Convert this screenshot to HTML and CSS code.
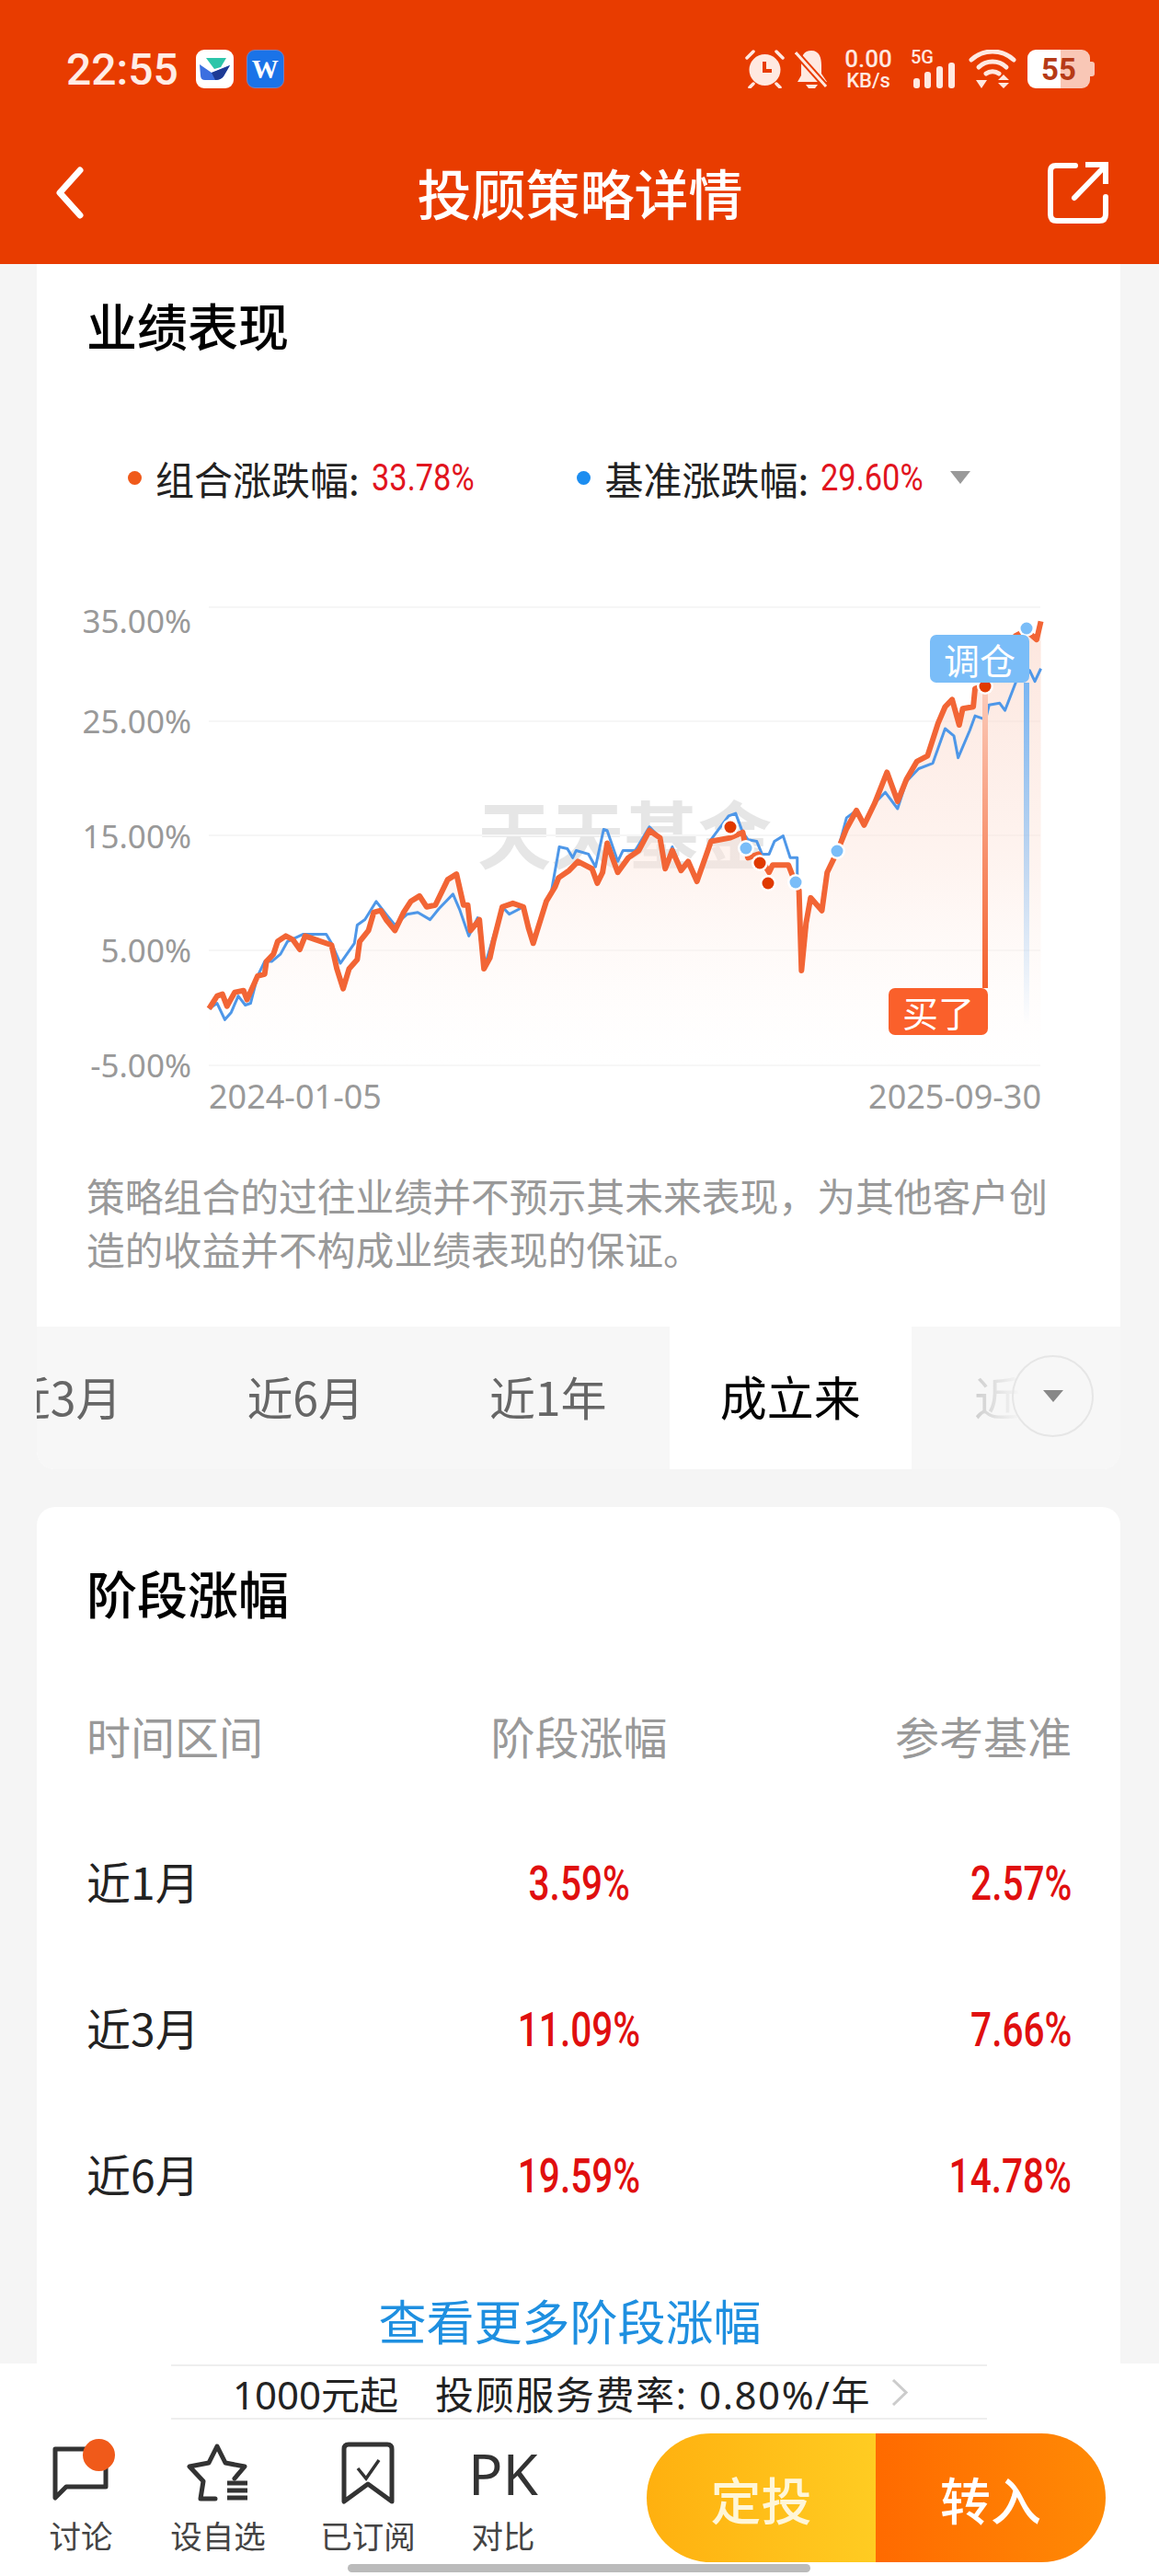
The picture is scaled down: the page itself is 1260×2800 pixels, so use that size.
FILE: index.html
```html
<!DOCTYPE html>
<html lang="zh-CN">
<head>
    <meta charset="UTF-8">
    <meta name="viewport" content="width=device-width, initial-scale=1.0">
    <title>投顾策略详情</title>
    <link rel="stylesheet" href="styles.css">
</head>
<body>
<div class="page">

    <header class="top-bar">
        <div class="status-bar">
            <span class="time">22:55</span>
            <span class="app-icon app-white">
                <svg width="34" height="26" viewBox="0 0 34 26">
                    <path d="M8 1 L30 1 L24 11 L17 13 Z" fill="#2cc5a9"/>
                    <path d="M1 8 L14 17 L34 9 L27 21 Q24 25 18 25 L7 25 Q2 25 2 20 Z" fill="#3b6fe0"/>
                    <path d="M14 17 L34 9 L27 21 Q24 25 18 25 Z" fill="#1d3a94"/>
                </svg>
            </span>
            <span class="app-icon app-blue"><span class="app-w">W</span></span>

            <div class="status-right">
                <svg class="st-alarm" width="43" height="42" viewBox="0 0 43 42">
                    <circle cx="21.5" cy="22" r="17" fill="#ffe9e1"/>
                    <path d="M21 13 V23 H29" fill="none" stroke="#e83c00" stroke-width="4"/>
                    <path d="M2 9 L9 2 M41 9 L34 2 M9 37 L5 41 M34 37 L38 41" stroke="#ffe9e1" stroke-width="3.5" stroke-linecap="round"/>
                </svg>
                <svg class="st-bell" width="36" height="42" viewBox="0 0 36 42">
                    <path d="M18 1 C27 1 29 9 29 17 L29 26 L35 35 L3 35 L7 28 L7 15 C7 7 10 1 18 1 Z" fill="#ffe9e1"/>
                    <path d="M12 38 H25 L22 42 H15 Z" fill="#ffe9e1"/>
                    <path d="M1 3 L34 40" stroke="#e83c00" stroke-width="7"/>
                    <path d="M1 3 L34 40" stroke="#ffe9e1" stroke-width="3"/>
                </svg>
                <div class="st-speed">
                    <span class="speed-num">0.00</span>
                    <span class="speed-unit">KB/s</span>
                </div>
                <svg class="st-signal" width="50" height="54" viewBox="0 -6 50 54">
                    <text class="st-5g" x="0" y="15">5G</text>
                    <rect x="3" y="31" width="7" height="11" rx="3" fill="#ffe9e1"/>
                    <rect x="15" y="24" width="7" height="18" rx="3" fill="#ffe9e1"/>
                    <rect x="28" y="18" width="7" height="24" rx="3" fill="#ffe9e1"/>
                    <rect x="41" y="14" width="7" height="28" rx="3" fill="#ffe9e1"/>
                </svg>
                <svg class="st-wifi" width="52" height="42" viewBox="0 0 52 42">
                    <path d="M3 11 C16 -1 36 -1 49 11" fill="none" stroke="#ffe9e1" stroke-width="5" stroke-linecap="round"/>
                    <path d="M11 19 C19 11 33 11 41 19" fill="none" stroke="#ffe9e1" stroke-width="5" stroke-linecap="round"/>
                    <path d="M19 26 C23 23 29 23 33 26" fill="none" stroke="#ffe9e1" stroke-width="5" stroke-linecap="round"/>
                    <path d="M8 33 H20 L14 42 Z M32 33 L38 27 L44 33 Z M32 36 H44 L38 42 Z" fill="#ffe9e1"/>
                </svg>
                <div class="st-battery"><span>55</span></div>
            </div>
        </div>

        <nav class="nav-bar">
            <svg class="nav-back" width="31" height="57" viewBox="0 0 31 57">
                <path d="M27 4 L5 28.5 L27 53" fill="none" stroke="#fff" stroke-width="7" stroke-linecap="round" stroke-linejoin="round"/>
            </svg>
            <h1 class="nav-title">投顾策略详情</h1>
            <svg class="nav-share" width="66" height="67" viewBox="0 0 66 67">
                <path d="M30 4 H9 Q3 4 3 10 V57 Q3 64 10 64 H56 Q63 64 63 57 V38" fill="none" stroke="#fff" stroke-width="6" stroke-linecap="round"/>
                <path d="M29 39 L60 7" fill="none" stroke="#fff" stroke-width="6" stroke-linecap="round"/>
                <path d="M41 3 H63 V24" fill="none" stroke="#fff" stroke-width="6"/>
            </svg>
        </nav>
    </header>

    <main class="scroll">
        <section class="card card-perf">
            <h3 class="card-title">业绩表现</h3>

            <div class="legend">
                <span class="legend-dot dot-orange"></span>
                <span class="legend-name">组合涨跌幅:</span>
                <span class="legend-value">33.78%</span>
                <span class="legend-dot dot-blue"></span>
                <span class="legend-name">基准涨跌幅:</span>
                <span class="legend-value">29.60%</span>
                <span class="legend-arrow"></span>
            </div>

            <!-- chart drawn in page coordinates, line data traced in a 2.6x working grid -->
            <svg class="chart" width="1178" height="600" viewBox="40 640 1178 600">
                <defs>
                    <linearGradient id="areaFill" x1="0" y1="0" x2="0" y2="1">
                        <stop offset="0" stop-color="#fbd5c7" stop-opacity="0.6"/>
                        <stop offset="0.55" stop-color="#fde6dd" stop-opacity="0.45"/>
                        <stop offset="1" stop-color="#fff" stop-opacity="0.2"/>
                    </linearGradient>
                    <linearGradient id="buyLine" x1="0" y1="0" x2="0" y2="1">
                        <stop offset="0" stop-color="#fbcdbd"/>
                        <stop offset="1" stop-color="#f4602c"/>
                    </linearGradient>
                    <linearGradient id="holdLine" x1="0" y1="0" x2="0" y2="1">
                        <stop offset="0" stop-color="#7ab6f2"/>
                        <stop offset="1" stop-color="#7ab6f2" stop-opacity="0"/>
                    </linearGradient>
                </defs>

                <text class="watermark" x="519" y="938">天天基金</text>

                <g class="grid-lines">
                    <line x1="227" x2="1131" y1="660" y2="660"/>
                    <line x1="227" x2="1131" y1="784" y2="784"/>
                    <line x1="227" x2="1131" y1="908" y2="908"/>
                    <line x1="227" x2="1131" y1="1033" y2="1033"/>
                    <line x1="227" x2="1131" y1="1158" y2="1158"/>
                </g>

                <g class="axis-y">
                    <text x="208" y="674">35.00%</text>
                    <text x="208" y="783">25.00%</text>
                    <text x="208" y="908">15.00%</text>
                    <text x="208" y="1032">5.00%</text>
                    <text x="208" y="1157">-5.00%</text>
                </g>
                <text class="axis-x" x="227" y="1191">2024-01-05</text>
                <text class="axis-x axis-x-end" x="1132" y="1191">2025-09-30</text>

                <g transform="translate(60 620) scale(.3827 .3954)">
                    <polygon class="area" points="437,1360 437,1205 460,1170 475,1165 488,1198 510,1160 535,1155 545,1180 575,1115 595,1110 600,1075 620,1055 632,1020 655,1005 675,1015 695,1042 710,1005 740,1015 785,1030 800,1095 818,1150 835,1095 858,1070 865,1020 890,990 905,940 925,935 940,960 965,990 990,940 1010,910 1035,895 1055,925 1080,920 1115,850 1140,835 1160,920 1172,920 1180,990 1205,960 1218,1095 1235,1065 1245,1020 1270,925 1300,915 1330,925 1345,985 1358,1025 1395,910 1420,870 1430,845 1460,825 1485,800 1525,820 1540,860 1555,830 1568,750 1598,830 1628,790 1658,770 1688,715 1718,735 1733,820 1753,770 1778,825 1798,800 1823,855 1863,745 1918,735 1953,720 1968,790 1998,780 2028,830 2038,810 2083,810 2093,835 2113,880 2120,1100 2133,970 2146,900 2178,935 2193,830 2223,770 2248,710 2276,660 2298,700 2328,640 2363,555 2393,635 2418,575 2448,525 2478,510 2508,420 2528,375 2548,355 2568,425 2578,380 2608,375 2613,325 2643,315 2728,180 2758,165 2788,190 2800,140 2800,1360"/>
                    <polyline class="line-blue" points="437,1205 460,1190 482,1235 500,1215 520,1170 540,1195 555,1190 575,1115 595,1075 615,1075 640,1055 660,1020 705,1000 770,1000 785,1025 810,1080 850,1025 858,975 880,960 912,910 940,945 965,975 1000,945 1030,940 1065,960 1090,930 1130,890 1150,935 1175,1005 1200,955 1218,1095 1270,925 1290,945 1330,925 1358,1025 1395,915 1410,880 1432,760 1455,765 1470,790 1480,770 1515,780 1535,815 1558,712 1568,715 1598,800 1613,770 1648,770 1688,705 1718,735 1733,820 1753,760 1778,820 1798,800 1823,850 1863,740 1913,675 1933,668 1953,720 1968,740 1993,745 2008,780 2028,780 2043,745 2068,730 2088,790 2108,790 2108,830 2120,1080 2146,900 2178,935 2193,830 2223,770 2248,680 2276,660 2298,700 2328,640 2358,610 2393,655 2418,580 2453,545 2493,530 2528,435 2553,455 2565,515 2598,440 2613,400 2643,410 2653,370 2683,365 2698,385 2728,310 2738,270 2768,275 2783,305 2800,270"/>
                    <polyline class="line-orange" points="437,1205 460,1170 475,1165 488,1198 510,1160 535,1155 545,1180 575,1115 595,1110 600,1075 620,1055 632,1020 655,1005 675,1015 695,1042 710,1005 740,1015 785,1030 800,1095 818,1150 835,1095 858,1070 865,1020 890,990 905,940 925,935 940,960 965,990 990,940 1010,910 1035,895 1055,925 1080,920 1115,850 1140,835 1160,920 1172,920 1180,990 1205,960 1218,1095 1235,1065 1245,1020 1270,925 1300,915 1330,925 1345,985 1358,1025 1395,910 1420,870 1430,845 1460,825 1485,800 1525,820 1540,860 1555,830 1568,750 1598,830 1628,790 1658,770 1688,715 1718,735 1733,820 1753,770 1778,825 1798,800 1823,855 1863,745 1918,735 1953,720 1968,790 1998,780 2028,830 2038,810 2083,810 2093,835 2113,880 2120,1100 2133,970 2146,900 2178,935 2193,830 2223,770 2248,710 2276,660 2298,700 2328,640 2363,555 2393,635 2418,575 2448,525 2478,510 2508,420 2528,375 2548,355 2568,425 2578,380 2608,375 2613,325 2643,315 2728,180 2758,165 2788,190 2800,140"/>
                </g>

                <rect x="1068" y="742" width="6" height="332" fill="url(#buyLine)"/>
                <rect x="1113" y="742" width="6" height="372" fill="url(#holdLine)"/>

                <g class="marks">
                    <circle class="ring" cx="794" cy="899" r="9"/><circle class="mark-red" cx="794" cy="899" r="6.5"/>
                    <circle class="ring" cx="811" cy="922" r="9"/><circle class="mark-blue" cx="811" cy="922" r="6.5"/>
                    <circle class="ring" cx="826" cy="938" r="9"/><circle class="mark-red" cx="826" cy="938" r="6.5"/>
                    <circle class="ring" cx="835" cy="960" r="9"/><circle class="mark-red" cx="835" cy="960" r="6.5"/>
                    <circle class="ring" cx="865" cy="959" r="9"/><circle class="mark-blue" cx="865" cy="959" r="6.5"/>
                    <circle class="ring" cx="910" cy="925" r="9"/><circle class="mark-blue" cx="910" cy="925" r="6.5"/>
                    <circle class="ring" cx="1071" cy="746" r="9"/><circle class="mark-red" cx="1071" cy="746" r="6.5"/>
                    <circle class="ring" cx="1116" cy="683" r="9"/><circle class="mark-blue" cx="1116" cy="683" r="6.5"/>
                </g>

                <rect x="1011" y="690" width="108" height="52" rx="7" fill="#7abdf8"/>
                <text class="tag-text" x="1065" y="716">调仓</text>
                <rect x="966" y="1074" width="108" height="51" rx="7" fill="#fa602b"/>
                <text class="tag-text" x="1020" y="1099">买了</text>
            </svg>

            <p class="disclaimer">策略组合的过往业绩并不预示其未来表现，为其他客户创造的收益并不构成业绩表现的保证。</p>

            <div class="tabs">
                <div class="tab">近3月</div>
                <div class="tab">近6月</div>
                <div class="tab">近1年</div>
                <div class="tab tab-active">成立来</div>
                <div class="tab">近2年</div>
                <div class="tabs-fade"></div>
                <div class="tabs-more"><span class="tabs-more-arrow"></span></div>
            </div>
        </section>

        <section class="card card-stage">
            <h3 class="card-title">阶段涨幅</h3>
            <table class="stage-table">
                <thead>
                    <tr>
                        <th>时间区间</th>
                        <th>阶段涨幅</th>
                        <th>参考基准</th>
                    </tr>
                </thead>
                <tbody>
                    <tr>
                        <td>近1月</td>
                        <td><span class="stage-num">3.59%</span></td>
                        <td><span class="stage-num">2.57%</span></td>
                    </tr>
                    <tr>
                        <td>近3月</td>
                        <td><span class="stage-num">11.09%</span></td>
                        <td><span class="stage-num">7.66%</span></td>
                    </tr>
                    <tr>
                        <td>近6月</td>
                        <td><span class="stage-num">19.59%</span></td>
                        <td><span class="stage-num">14.78%</span></td>
                    </tr>
                </tbody>
            </table>
            <div class="more-link">查看更多阶段涨幅</div>
        </section>
    </main>

    <footer class="bottom-bar">
        <div class="fee-row">
            <span>1000元起</span>
            <span class="fee-rate">投顾服务费率: 0.80%/年</span>
            <svg class="fee-chevron" width="18" height="29" viewBox="0 0 18 29">
                <path d="M2 1 L16 14.5 L2 28" fill="none" stroke="#ccc" stroke-width="3"/>
            </svg>
        </div>
        <div class="action-row">
            <div class="tools">
                <div class="tool">
                    <div class="tool-icon tool-chat">
                        <svg width="62" height="62" viewBox="0 0 62 62">
                            <path d="M3 5 H58 V46 H15 L3 58 Z" fill="none" stroke="#333" stroke-width="5" stroke-linejoin="round"/>
                        </svg>
                        <span class="chat-badge"></span>
                    </div>
                    <span class="tool-label">讨论</span>
                </div>
                <div class="tool">
                    <div class="tool-icon">
                        <svg width="68" height="64" viewBox="0 0 68 64">
                            <path d="M31 60 L15 60 L18 41 L3 25 L24 21 L33 3 L42 21 L63 25 L52 38" fill="none" stroke="#333" stroke-width="5" stroke-linejoin="round" stroke-linecap="round"/>
                            <path d="M44 43 H66 M44 51 H66 M44 59 H66" stroke="#333" stroke-width="5"/>
                        </svg>
                    </div>
                    <span class="tool-label">设自选</span>
                </div>
                <div class="tool">
                    <div class="tool-icon">
                        <svg width="58" height="68" viewBox="0 0 58 68">
                            <path d="M3 8 Q3 3 8 3 H50 Q55 3 55 8 V65 L29 46 L3 65 Z" fill="none" stroke="#333" stroke-width="5" stroke-linejoin="round"/>
                            <path d="M18 29 L27 40 L41 20" fill="none" stroke="#333" stroke-width="3.5"/>
                        </svg>
                    </div>
                    <span class="tool-label">已订阅</span>
                </div>
                <div class="tool">
                    <div class="tool-icon tool-pk">PK</div>
                    <span class="tool-label">对比</span>
                </div>
            </div>
            <div class="trade-buttons">
                <div class="btn-plan">定投</div>
                <div class="btn-buy">转入</div>
            </div>
        </div>
    </footer>

    <div class="home-indicator"></div>
</div>
</body>
</html>
```

FILE: styles.css
```css
* {
    box-sizing: border-box;
}

body {
    margin: 0;
    font-family: "Noto Sans", "Noto Sans CJK SC", sans-serif;
}

.page {
    position: relative;
    width: 1260px;
    height: 2800px;
    display: flex;
    flex-direction: column;
    overflow: hidden;
    background-color: #f5f5f5;
    color: #000;
}

/* top bar */
.top-bar {
    flex: none;
    height: 287px;
    background-color: #e83c00;
    color: #fff;
}

.status-bar {
    height: 150px;
    display: flex;
    align-items: center;
    padding: 0 70px 0 72px;
}

.time {
    font-family: Roboto, sans-serif;
    font-weight: 500;
    font-size: 48px;
    color: #ffece5;
    margin-right: 19px;
}

.app-icon {
    width: 41px;
    height: 42px;
    border-radius: 9px;
    display: flex;
    align-items: center;
    justify-content: center;
    margin-right: 14px;
}

.app-white {
    background-color: #fff;
}

.app-blue {
    background-color: #1a73e8;
    border: 1px solid #7d7fb8;
}

.app-w {
    font-family: "Liberation Serif", serif;
    font-weight: 700;
    font-size: 29px;
    line-height: 1;
    color: #fff;
}

.status-right {
    margin-left: auto;
    display: flex;
    align-items: center;
}

.st-bell {
    margin-left: 11px;
}

.st-speed {
    margin-left: 18px;
    width: 52px;
    display: flex;
    flex-direction: column;
    align-items: center;
    font-family: Roboto, sans-serif;
    font-weight: 500;
    color: #ffe9e1;
}

.speed-num {
    font-size: 26px;
    line-height: 26px;
}

.speed-unit {
    font-size: 22px;
    line-height: 22px;
}

.st-signal {
    margin-left: 20px;
}

.st-5g {
    font-family: Roboto, sans-serif;
    font-weight: 500;
    font-size: 20px;
    fill: #ffe9e1;
}

.st-wifi {
    margin-left: 13px;
}

.st-battery {
    position: relative;
    margin-left: 12px;
    margin-right: 5px;
    width: 68px;
    height: 42px;
    border-radius: 9px;
    background: linear-gradient(90deg, #fff 36px, #f9c7b6 36px);
    display: flex;
    align-items: center;
    justify-content: center;
    font-family: Roboto, sans-serif;
    font-weight: 700;
    font-size: 33px;
    color: #b63a16;
}

.st-battery::after {
    content: "";
    position: absolute;
    right: -5px;
    top: 13px;
    width: 5px;
    height: 16px;
    border-radius: 0 3px 3px 0;
    background-color: #f9c7b6;
}

.nav-bar {
    height: 137px;
    padding: 0 55px 19px 60px;
    display: grid;
    grid-template-columns: 1fr auto 1fr;
    align-items: center;
}

.nav-title {
    margin: 0 4px 0 0;
    font-family: "Noto Sans CJK SC", sans-serif;
    font-size: 59px;
    font-weight: 500;
    line-height: 70px;
}

.nav-share {
    justify-self: end;
}

/* cards */
.scroll {
    flex: 1;
    min-height: 0;
    overflow: hidden;
    padding: 0 42px 0 40px;
}

.card {
    background-color: #fff;
}

.card-perf {
    padding-top: 38px;
    border-radius: 0 0 20px 20px;
    overflow: hidden;
}

.card-stage {
    margin-top: 41px;
    padding: 65px 53px 0 54px;
    border-radius: 20px 20px 0 0;
    height: 940px;
}

.card-title {
    margin: 0;
    font-family: "Noto Sans CJK SC", sans-serif;
    font-size: 55px;
    font-weight: 500;
    line-height: 54px;
}

.card-perf .card-title {
    padding-left: 54px;
}

/* legend */
.legend {
    margin-top: 120px;
    padding-left: 99px;
    height: 40px;
    display: flex;
    align-items: center;
    font-family: "Noto Sans CJK SC", sans-serif;
    font-size: 42px;
    color: #222;
}

.legend-dot {
    width: 15px;
    height: 15px;
    border-radius: 50%;
    margin-right: 15px;
}

.dot-orange {
    background-color: #f05a1a;
}

.dot-blue {
    margin-left: 112px;
    background-color: #1c8df0;
}

/* the numbers are a narrow face in the app, squeeze Roboto to get there */
.legend-value {
    margin-left: 13px;
    margin-right: -18px;
    font-family: Roboto, sans-serif;
    font-size: 40px;
    color: #e1141e;
    transform: scaleX(0.86);
    transform-origin: left center;
}

.legend-arrow {
    margin-left: 29px;
    width: 0;
    height: 0;
    border-left: 11px solid transparent;
    border-right: 11px solid transparent;
    border-top: 14px solid #999;
}

/* chart */
.chart {
    display: block;
    margin-top: 101px;
}

.watermark {
    font-family: "Noto Sans CJK SC", sans-serif;
    font-size: 80px;
    font-weight: 700;
    fill: #e6e6e6;
}

.grid-lines line {
    stroke: #f6f6f6;
    stroke-width: 2;
}

.axis-y text {
    font-size: 35px;
    fill: #999;
    text-anchor: end;
    dominant-baseline: central;
}

.axis-x {
    font-size: 36px;
    fill: #999;
    dominant-baseline: central;
}

.axis-x-end {
    text-anchor: end;
}

.area {
    fill: url(#areaFill);
}

.line-blue,
.line-orange {
    fill: none;
    vector-effect: non-scaling-stroke;
    stroke-linejoin: round;
}

.line-blue {
    stroke: #4e97e8;
    stroke-width: 3;
}

.line-orange {
    stroke: #f26535;
    stroke-width: 6;
}

.ring {
    fill: #fff;
}

.mark-red {
    fill: #e03a00;
}

.mark-blue {
    fill: #7abdf8;
}

.tag-text {
    font-family: "Noto Sans CJK SC", sans-serif;
    font-size: 39px;
    fill: #fff;
    text-anchor: middle;
    dominant-baseline: central;
}

.disclaimer {
    margin: 30px 53px 56px 54px;
    font-family: "Noto Sans CJK SC", sans-serif;
    font-size: 41.8px;
    line-height: 58px;
    color: #999;
}

/* range tabs */
.tabs {
    position: relative;
    height: 155px;
    display: flex;
    margin-left: -103px;
    background-color: #f7f7f7;
    font-family: "Noto Sans CJK SC", sans-serif;
    font-size: 50px;
    color: #666;
}

.tab {
    flex: none;
    width: 263.5px;
    padding-bottom: 5px;
    display: flex;
    align-items: center;
    justify-content: center;
}

.tab-active {
    background-color: #fff;
    color: #000;
    font-size: 51px;
}

.tabs-fade {
    position: absolute;
    top: 0;
    bottom: 0;
    right: 0;
    width: 180px;
    background: linear-gradient(90deg, rgba(247, 247, 247, 0.6), #f7f7f7 40%);
}

.tabs-more {
    position: absolute;
    right: 29px;
    top: 31px;
    width: 89px;
    height: 89px;
    border-radius: 50%;
    border: 2px solid #e6e6e6;
    display: flex;
    align-items: center;
    justify-content: center;
}

.tabs-more-arrow {
    width: 0;
    height: 0;
    border-left: 11px solid transparent;
    border-right: 11px solid transparent;
    border-top: 13px solid #888;
}

/* stage table */
.stage-table {
    width: 100%;
    margin-top: 51px;
    border-collapse: collapse;
    table-layout: fixed;
    font-family: "Noto Sans CJK SC", sans-serif;
    font-size: 48px;
}

.stage-table th {
    height: 156px;
    padding: 0;
    font-weight: 400;
    color: #999;
}

.stage-table td {
    height: 159px;
    padding: 0;
    color: #222;
}

.stage-table th:nth-child(1),
.stage-table td:nth-child(1) {
    text-align: left;
}

.stage-table th:nth-child(2),
.stage-table td:nth-child(2) {
    text-align: center;
}

.stage-table th:nth-child(3),
.stage-table td:nth-child(3) {
    text-align: right;
}

.stage-num {
    display: inline-block;
    font-family: Roboto, sans-serif;
    font-size: 52px;
    font-weight: 500;
    line-height: 56px;
    color: #e00f0f;
    transform: scaleX(0.78);
}

.stage-table td:nth-child(3) .stage-num {
    transform-origin: right center;
}

.more-link {
    margin-top: 53px;
    padding-right: 20px;
    font-family: "Noto Sans CJK SC", sans-serif;
    font-size: 52px;
    line-height: 56px;
    text-align: center;
    color: #1e8fe0;
}

/* bottom bar */
.bottom-bar {
    flex: none;
    height: 231px;
    background-color: #fff;
}

.fee-row {
    margin: 1px 187px 0 186px;
    height: 60px;
    padding-right: 19px;
    border-top: 2px solid #eee;
    border-bottom: 2px solid #eee;
    display: flex;
    align-items: center;
    justify-content: center;
    font-size: 42px;
    color: #222;
}

.fee-rate {
    margin-left: 40px;
    letter-spacing: 1.6px;
}

.fee-chevron {
    margin-left: 22px;
}

.action-row {
    display: flex;
}

.tools {
    flex: none;
    margin-left: 28px;
    padding-top: 24px;
    display: grid;
    grid-template-columns: 120px 178px 148px 146px;
    justify-items: center;
}

.tool {
    display: flex;
    flex-direction: column;
    align-items: center;
}

.tool-icon {
    position: relative;
    height: 68px;
    display: flex;
    align-items: center;
    justify-content: center;
}

.chat-badge {
    position: absolute;
    right: -6px;
    top: -3px;
    width: 35px;
    height: 35px;
    border-radius: 50%;
    background-color: #f05a1a;
}

.tool-pk {
    font-family: "Noto Sans", sans-serif;
    font-size: 62px;
    color: #333;
}

.tool-label {
    margin-top: 16px;
    font-family: "Noto Sans CJK SC", sans-serif;
    font-size: 34.5px;
    line-height: 34px;
    color: #444;
}

.trade-buttons {
    flex: none;
    margin: 15px 0 0 83px;
    width: 499px;
    height: 140px;
    border-radius: 70px;
    overflow: hidden;
    display: flex;
    font-family: "Noto Sans CJK SC", sans-serif;
    font-size: 55px;
    font-weight: 500;
    color: #fff;
}

.btn-plan,
.btn-buy {
    display: flex;
    align-items: center;
    justify-content: center;
}

.btn-plan {
    width: 249px;
    background: linear-gradient(90deg, #ffb00f, #ffcc22);
    color: #fff6d8;
}

.btn-buy {
    width: 250px;
    background: linear-gradient(90deg, #ff6a00, #ff8a05);
}

.home-indicator {
    position: absolute;
    left: 378px;
    bottom: 4px;
    width: 503px;
    height: 9px;
    border-radius: 5px;
    background-color: #bbb;
}
```
